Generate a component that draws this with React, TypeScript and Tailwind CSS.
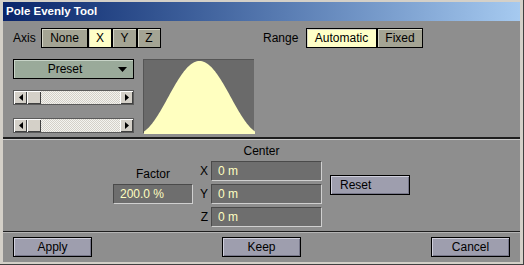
import React from "react";

const font = { fontFamily: '"Liberation Sans", Arial, sans-serif' };

function curvePath() {
  const w = 111;
  const h = 74;
  const pts: string[] = [];
  for (let x = 0; x <= w; x++) {
    const d = x - 55.5;
    const a = Math.min(Math.abs(d) / 63, 1);
    const c = Math.cos((Math.PI / 2) * a);
    const y = h - (h - 1) * c * c;
    pts.push(`${x},${y.toFixed(2)}`);
  }
  return `M0,${h} L${pts.join(" L")} L${w},${h} Z`;
}

function Btn({
  children,
  active,
  className = "",
}: {
  children: React.ReactNode;
  active?: boolean;
  className?: string;
}) {
  return (
    <div
      className={
        "h-[20px] flex items-center justify-center border border-black text-[12px] text-black shadow-[inset_1px_1px_0_#d6d6c8] " +
        (active ? "bg-[#ffffc8]" : "bg-[#a4a494]") +
        " " +
        className
      }
    >
      {children}
    </div>
  );
}

function ActionBtn({ children, className = "" }: { children: React.ReactNode; className?: string }) {
  return (
    <div
      className={
        "h-[20px] flex items-center border border-black bg-[#9e9eae] text-[12px] text-black shadow-[inset_1px_1px_0_#cfcfdc,inset_-1px_-1px_0_#77778a] " +
        className
      }
    >
      {children}
    </div>
  );
}

function Arrow({ dir }: { dir: "left" | "right" }) {
  return (
    <div className="w-[13px] h-full flex items-center justify-center bg-[#d4d0c8] shadow-[inset_1px_1px_0_#fff,inset_-1px_-1px_0_#404040]">
      <svg width="4" height="7" viewBox="0 0 4 7">
        {dir === "left" ? (
          <path d="M4 0 L0 3.5 L4 7 Z" fill="#000" />
        ) : (
          <path d="M0 0 L4 3.5 L0 7 Z" fill="#000" />
        )}
      </svg>
    </div>
  );
}

function Scroll() {
  return (
    <div className="h-[15px] w-[121px] flex border border-[#5a5a5a] bg-[repeating-conic-gradient(#d4d0c8_0_25%,#f4f4f0_0_50%)] bg-[length:2px_2px]">
      <Arrow dir="left" />
      <div className="w-[14px] h-full bg-[#d4d0c8] shadow-[inset_1px_1px_0_#fff,inset_-1px_-1px_0_#404040]" />
      <div className="flex-1" />
      <Arrow dir="right" />
    </div>
  );
}

function Field({ value, className = "" }: { value: string; className?: string }) {
  return (
    <div
      className={
        "h-[20px] flex items-center pl-[6px] bg-[#6e6e6e] text-[12px] text-[#ffffc0] border-t border-l border-[#4a4a4a] border-r border-b border-r-[#d0d0d0] border-b-[#d0d0d0] " +
        className
      }
    >
      {value}
    </div>
  );
}

export default function App() {
  return (
    <div
      style={font}
      className="w-[524px] h-[265px] flex flex-col bg-[#d4d0c8] px-[3px] pt-[2px] pb-[2px] border-r border-b border-[#404040] overflow-hidden"
    >
      <div className="h-[19px] shrink-0 flex items-center pl-[3px] bg-gradient-to-r from-[#0a246a] to-[#a6caf0] text-white font-bold text-[11.5px]">
        Pole Evenly Tool
      </div>

      <div className="flex-1 flex flex-col bg-[#8e8e8e] text-black">
        <div className="h-[116px] px-[10px] pt-[7px]">
          <div className="flex items-center h-[20px]">
            <div className="w-[250px] flex items-center">
              <span className="text-[12px] w-[28px]">Axis</span>
              <Btn className="w-[47px]">None</Btn>
              <Btn active className="w-[24px]">X</Btn>
              <Btn className="w-[25px]">Y</Btn>
              <Btn className="w-[24px]">Z</Btn>
            </div>
            <span className="text-[12px] w-[43px]">Range</span>
            <Btn active className="w-[71px]">Automatic</Btn>
            <Btn className="w-[46px]">Fixed</Btn>
          </div>

          <div className="flex mt-[11px] gap-[9px]">
            <div className="w-[121px] flex flex-col">
              <div className="h-[20px] flex items-center border border-black bg-[#9aaa9a] shadow-[inset_1px_1px_0_#c8d4c8] text-[12px] relative">
                <span className="flex-1 text-center pr-[17px]">Preset</span>
                <svg className="absolute right-[6px] top-[7px]" width="9" height="5" viewBox="0 0 9 5">
                  <path d="M0 0 H9 L4.5 5 Z" fill="#000" />
                </svg>
              </div>
              <div className="mt-[11px]">
                <Scroll />
              </div>
              <div className="mt-[13px]">
                <Scroll />
              </div>
            </div>
            <div className="w-[111px] h-[74px] bg-[#6a6a6a] border-t border-l border-[#555]">
              <svg width="111" height="74" viewBox="0 0 111 74" className="block">
                <path d={curvePath()} fill="#ffffc0" />
              </svg>
            </div>
          </div>
        </div>

        <div className="h-[2px] bg-[#1e1e1e]" />
        <div className="h-px bg-[#c8c8c8]" />

        <div className="h-[91px] pl-[110px] pt-[4px]">
          <div className="grid grid-cols-[80px_18px_111px_80px] grid-rows-[14px_20px_20px_20px] gap-y-[3px]">
            <div />
            <div className="col-span-2 text-center pl-[8px] text-[12px] leading-[14px]">Center</div>
            <div />

            <div className="text-center text-[12px] leading-[14px] self-end">Factor</div>
            <div className="text-right pr-[3px] text-[12px] leading-[20px]">X</div>
            <Field value="0 m" />
            <div className="row-span-2 pl-[8px] pt-[14px]">
              <ActionBtn className="w-[80px] pl-[9px]">Reset</ActionBtn>
            </div>

            <Field value="200.0 %" />
            <div className="text-right pr-[3px] text-[12px] leading-[20px]">Y</div>
            <Field value="0 m" />

            <div />
            <div className="text-right pr-[3px] text-[12px] leading-[20px]">Z</div>
            <Field value="0 m" />
          </div>
        </div>

        <div className="h-px bg-[#1e1e1e]" />
        <div className="h-px bg-[#b4b4b4]" />

        <div className="flex-1 flex justify-between items-start px-[10px] pt-[4px]">
          <ActionBtn className="w-[79px] justify-center">Apply</ActionBtn>
          <ActionBtn className="w-[79px] justify-center">Keep</ActionBtn>
          <ActionBtn className="w-[79px] justify-center">Cancel</ActionBtn>
        </div>
      </div>
    </div>
  );
}
